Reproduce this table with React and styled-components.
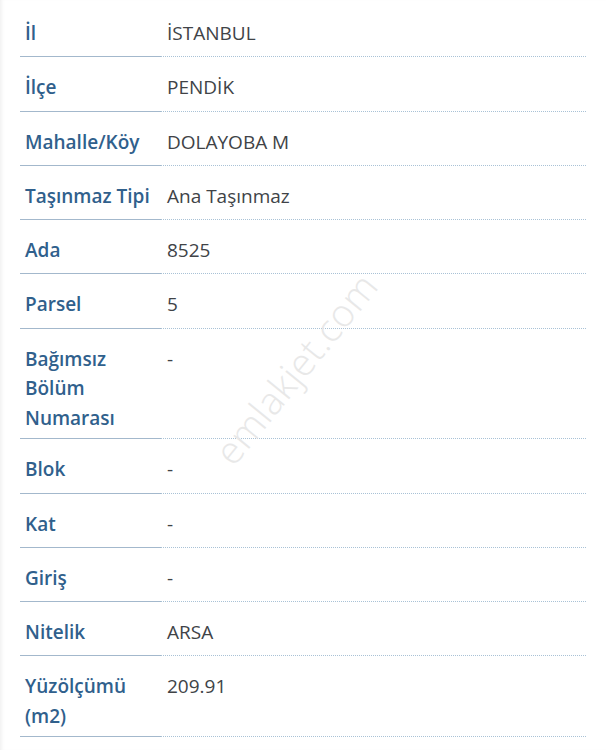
import React from "react";
import styled, { createGlobalStyle } from "styled-components";

const GlobalStyle = createGlobalStyle`
  * {
    margin: 0;
    padding: 0;
    box-sizing: border-box;
  }
  body {
    background: #fff;
    font-family: "Open Sans", "Noto Sans", sans-serif;
  }
`;

const Page = styled.div`
  position: relative;
  width: 606px;
  height: 750px;
  overflow: hidden;
  background: #fff;
  padding: 3px 20px 0 20px;
  box-shadow: inset 4px 0 4px -3px rgba(0, 0, 0, 0.08);
`;

const Table = styled.div`
  display: grid;
  grid-template-columns: 141px 1fr;
`;

const Label = styled.div`
  min-height: 54.3px;
  padding: 16px 0 5px 5px;
  font-size: 19px;
  line-height: 29.5px;
  font-weight: 600;
  color: #30608c;
  border-bottom: 1px solid #a3b8cc;
`;

const Value = styled.div`
  min-height: 54.3px;
  padding: 16px 0 5px 6px;
  font-size: 19px;
  line-height: 29.5px;
  font-weight: 400;
  color: #404347;
  border-bottom: 1px dotted #a9c2d6;
`;

const Watermark = styled.div`
  position: absolute;
  left: 295px;
  top: 368px;
  transform: translate(-50%, -50%) rotate(-51deg);
  font-size: 38px;
  font-weight: 300;
  color: #e8e8e8;
  letter-spacing: 0.5px;
  white-space: nowrap;
  pointer-events: none;
`;

const rows = [
  ["İl", "İSTANBUL"],
  ["İlçe", "PENDİK"],
  ["Mahalle/Köy", "DOLAYOBA M"],
  ["Taşınmaz Tipi", "Ana Taşınmaz"],
  ["Ada", "8525"],
  ["Parsel", "5"],
  [["Bağımsız", "Bölüm", "Numarası"], "-"],
  ["Blok", "-"],
  ["Kat", "-"],
  ["Giriş", "-"],
  ["Nitelik", "ARSA"],
  [["Yüzölçümü", "(m2)"], "209.91"],
];

const App = () => {
  return (
    <>
      <GlobalStyle />
      <Page>
        <Table>
          {rows.map(([label, value], i) => (
            <React.Fragment key={i}>
              <Label>
                {Array.isArray(label)
                  ? label.map((part, j) => (
                      <React.Fragment key={j}>
                        {j > 0 && <br />}
                        {part}
                      </React.Fragment>
                    ))
                  : label}
              </Label>
              <Value>{value}</Value>
            </React.Fragment>
          ))}
        </Table>
        <Watermark>emlakjet.com</Watermark>
      </Page>
    </>
  );
};

export default App;
